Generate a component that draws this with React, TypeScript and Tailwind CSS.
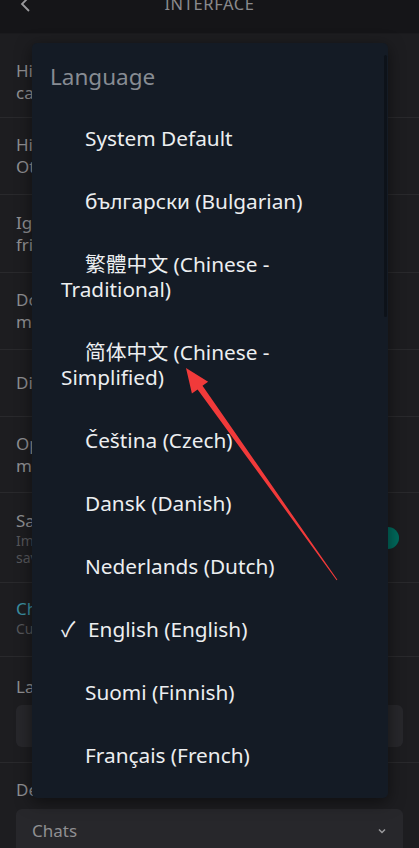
import React from "react";

const font = { fontFamily: '"Noto Sans", "Noto Sans CJK SC", sans-serif' };

function Thumb({ on }: { on?: boolean }) {
  return (
    <div className="relative w-[44px] h-[22px] shrink-0">
      {on && <div className="absolute right-[4px] top-[4px] w-[36px] h-[14px] rounded-full bg-[#0b4a42]" />}
      <div
        className={
          "absolute top-0 w-[22px] h-[22px] rounded-full " +
          (on ? "right-[4px] bg-[#00695c]" : "right-[16px] bg-[#141416]")
        }
      />
    </div>
  );
}

function Row({
  h,
  lines,
  sub,
  toggle,
  on,
  pt,
}: {
  h: string;
  lines: string[];
  sub?: string[];
  toggle?: boolean;
  on?: boolean;
  pt?: string;
}) {
  return (
    <div className={"flex items-center justify-between px-4 border-b border-[#29292c] " + h + " " + (pt || "")}>
      <div>
        {lines.map((l, i) => (
          <div key={i} className="text-[17px] leading-[22px] text-[#8f8f92]">
            {l}
          </div>
        ))}
        {sub &&
          sub.map((l, i) => (
            <div key={i} className="text-[14px] leading-[17px] text-[#55565a]">
              {l}
            </div>
          ))}
      </div>
      {toggle && <Thumb on={on} />}
    </div>
  );
}

const items: { a: string; b?: string; checked?: boolean }[] = [
  { a: "System Default" },
  { a: "български (Bulgarian)" },
  { a: "繁體中文 (Chinese -", b: "Traditional)" },
  { a: "简体中文 (Chinese -", b: "Simplified)" },
  { a: "Čeština (Czech)" },
  { a: "Dansk (Danish)" },
  { a: "Nederlands (Dutch)" },
  { a: "English (English)", checked: true },
  { a: "Suomi (Finnish)" },
  { a: "Français (French)" },
];

export default function App() {
  return (
    <div className="relative w-[419px] h-[848px] overflow-hidden bg-[#1d1d20]" style={font}>
      {/* header */}
      <div className="h-[34px] bg-[#151518] flex items-start justify-center relative border-b border-[#1a1a1d]">
        <svg className="absolute left-[19px] top-[-4px]" width="14" height="16" viewBox="0 0 14 16">
          <path d="M10 1 L3 8 L10 15" stroke="#9a9a9d" strokeWidth="1.8" fill="none" />
        </svg>
        <div className="text-[16.5px] leading-[20px] mt-[-6px] tracking-[0.6px] text-[#8a8a8d]">INTERFACE</div>
      </div>

      <Row h="h-[84px]" pt="pt-[12px]" lines={["Hide the call button in", "calls"]} toggle />
      <Row h="h-[77px]" lines={["Hide stories from", "Others"]} toggle />
      <Row h="h-[78px]" lines={["Ignore requests from non-", "friends"]} toggle />
      <Row h="h-[77px]" lines={["Double-tap to like", "messages"]} toggle />
      <Row h="h-[67px]" lines={["Disable swipe to reply"]} toggle />
      <Row h="h-[76px]" lines={["Open photos in", "media viewer"]} toggle />
      <Row
        h="h-[90px]"
        lines={["Save media automatically"]}
        sub={["Images and videos will be", "saved to your gallery"]}
        toggle
        on
      />
      <div className="h-[74px] border-b border-[#29292c] px-4 pt-[15px]">
        <div className="text-[17px] leading-[22px] text-[#3a8ea0]">Chat theme</div>
        <div className="text-[14px] leading-[18px] text-[#55565a]">Customize chat colors</div>
      </div>
      <div className="h-[106px] border-b border-[#29292c] px-4 pt-[19px]">
        <div className="text-[17px] leading-[22px] text-[#8f8f92]">Language</div>
        <div className="mt-[7px] h-[42px] rounded-md bg-[#27272b]" />
      </div>
      <div className="px-4 pt-[16px]">
        <div className="text-[17px] leading-[22px] text-[#8f8f92]">Default tab</div>
        <div className="mt-[8px] h-[44px] rounded-md bg-[#27272b] flex items-center justify-between px-4">
          <span className="text-[17px] text-[#8f8f92]">Chats</span>
          <svg width="10" height="8" viewBox="0 0 10 8">
            <path d="M2 2.5 L5 5.5 L8 2.5" stroke="#9a9a9d" strokeWidth="1.5" fill="none" />
          </svg>
        </div>
      </div>

      {/* dialog */}
      <div className="absolute left-[32px] top-[43px] w-[356px] h-[755px] rounded-[5px] bg-[#141b25] shadow-[0_4px_16px_rgba(0,0,0,0.5)]">
        <div className="absolute right-[1px] top-[12px] w-[3px] h-[262px] rounded-full bg-[#0d1219]" />
        <div className="pt-[20px] pl-[18px] text-[22.5px] leading-[28px] text-[#878c93]">Language</div>
        <div className="mt-[16px]">
          {items.map((it, i) => (
            <div key={i} className="pl-[29px] pr-[20px] py-[19px] text-[20.8px] leading-[25px] text-[#eceef0]">
              {it.checked ? (
                <div className="flex items-center">
                  <span className="w-[27px] text-[21px]">✓</span>
                  <span>{it.a}</span>
                </div>
              ) : (
                <div className="pl-[24px] whitespace-nowrap">{it.a}</div>
              )}
              {it.b && <div>{it.b}</div>}
            </div>
          ))}
        </div>
      </div>

      {/* red annotation arrow */}
      <svg className="absolute left-0 top-0 pointer-events-none" width="419" height="848" viewBox="0 0 419 848">
        <polygon
          points="186,368 208.1,381.8 202.5,385.8 337.4,579.8 336.6,580.2 197.6,389.4 191.9,393.4"
          fill="#f13a3a"
        />
      </svg>
    </div>
  );
}
